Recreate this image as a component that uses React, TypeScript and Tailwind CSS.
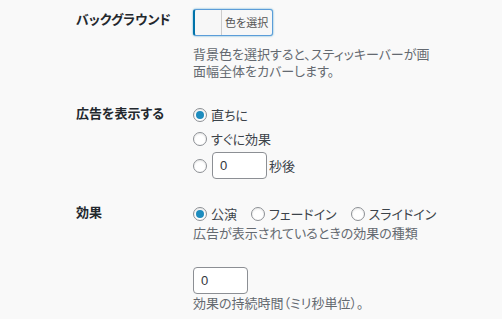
const jp = "font-['Noto_Sans_CJK_JP','Noto_Sans',sans-serif] [font-feature-settings:'palt']";

function Radio({ checked = false }: { checked?: boolean }) {
  return (
    <span className="flex h-[14px] w-[14px] shrink-0 items-center justify-center rounded-full border border-[#8c8f94] bg-white shadow-[inset_0_1px_2px_rgba(0,0,0,0.1)]">
      {checked && <span className="h-[8px] w-[8px] rounded-full bg-[#1e8cbe]" />}
    </span>
  );
}

function NumberInput() {
  return (
    <div className="flex h-[27px] w-[55px] items-center rounded-[4px] border border-[#8c8f94] bg-white pl-[7px] text-[13px] text-[#32373c] font-['Liberation_Sans',sans-serif]">
      0
    </div>
  );
}

export default function App() {
  return (
    <div className={`h-[319px] w-[502px] overflow-hidden bg-[#f9f9f9] pl-[76px] pt-[9px] text-[13px] ${jp}`}>
      {/* 背景色 */}
      <div className="flex">
        <div className="w-[117px] font-bold leading-[20px] text-[#23282d]">バックグラウンド</div>
        <div>
          <div className="flex h-[27px] w-[80px] overflow-hidden rounded-[3px] border border-[#5b9dd9] border-l-[#0073aa] border-l-2 bg-[#f7f7f7] shadow-[0_0_2px_rgba(30,140,190,0.8)]">
            <span className="w-[27px] border-r border-[#ccc]" />
            <span className="flex flex-1 items-center pl-[3px] text-[11px] text-[#555]">色を選択</span>
          </div>
          <p className="mt-[9px] w-[240px] leading-[17px] text-[#646970]">
            背景色を選択すると、スティッキーバーが画面幅全体をカバーします。
          </p>
        </div>
      </div>

      {/* 表示 */}
      <div className="mt-[24px] flex">
        <div className="w-[117px] font-bold leading-[20px] text-[#23282d]">広告を表示する</div>
        <div className="text-[#3c434a]">
          <label className="flex h-[24px] items-center gap-[4px]">
            <Radio checked />
            直ちに
          </label>
          <label className="flex h-[24px] items-center gap-[4px]">
            <Radio />
            すぐに効果
          </label>
          <label className="flex h-[29px] items-center">
            <Radio />
            <span className="ml-[5px] mr-[2px]">
              <NumberInput />
            </span>
            秒後
          </label>
        </div>
      </div>

      {/* 効果 */}
      <div className="mt-[24px] flex">
        <div className="w-[117px] font-bold leading-[16px] text-[#23282d]">効果</div>
        <div>
          <div className="flex h-[20px] items-center gap-[14px] text-[#3c434a]">
            <label className="flex items-center gap-[4px]">
              <Radio checked />
              公演
            </label>
            <label className="flex items-center gap-[4px]">
              <Radio />
              フェードイン
            </label>
            <label className="flex items-center gap-[4px]">
              <Radio />
              スライドイン
            </label>
          </div>
          <p className="leading-[17px] text-[#646970]">広告が表示されているときの効果の種類</p>
          <div className="mt-[26px]">
            <NumberInput />
          </div>
          <p className="leading-[17px] text-[#646970]">効果の持続時間（ミリ秒単位）。</p>
        </div>
      </div>
    </div>
  );
}
